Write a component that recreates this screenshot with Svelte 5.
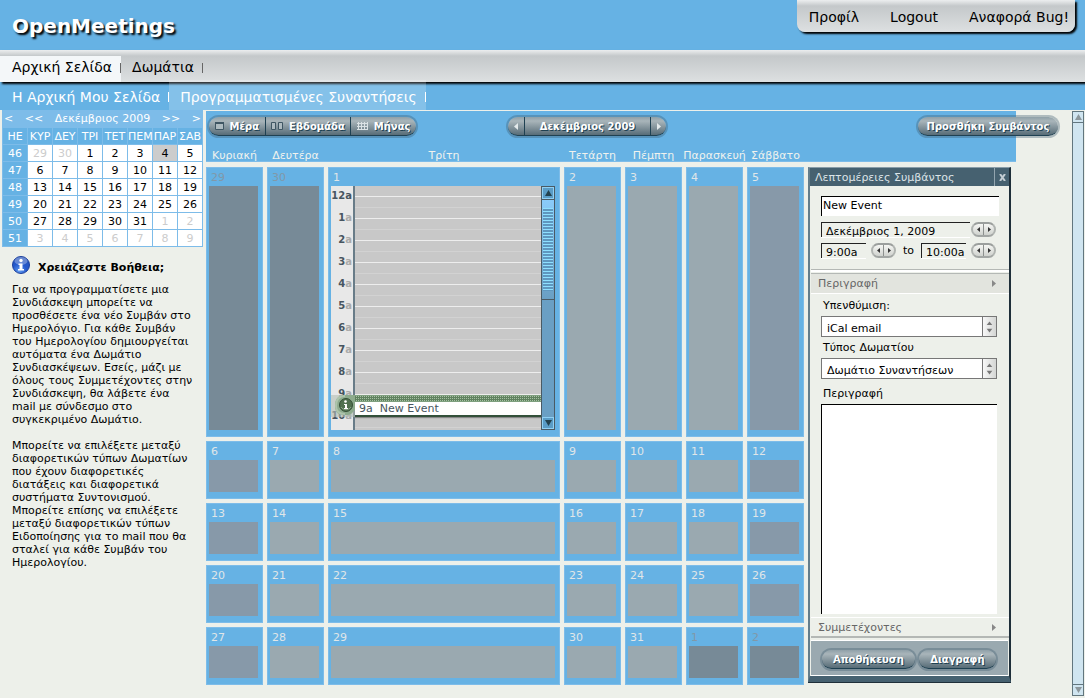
<script lang="ts">
	const dayNames = ['Κυριακή', 'Δευτέρα', 'Τρίτη', 'Τετάρτη', 'Πέμπτη', 'Παρασκευή', 'Σάββατο'];
	const shortNames = ['ΗΕ', 'ΚΥΡ', 'ΔΕΥ', 'ΤΡΙ', 'ΤΕΤ', 'ΠΕΜ', 'ΠΑΡ', 'ΣΑΒ'];
	const hours = [12, 1, 2, 3, 4, 5, 6, 7, 8, 9, 10];

	// six weeks starting on Sunday 29 November 2009
	const days = Array.from({ length: 42 }, (_, i) => {
		const date = new Date(2009, 10, 29 + i);
		return { n: date.getDate(), other: date.getMonth() !== 11, weekend: i % 7 === 0 || i % 7 === 6 };
	});
	const weeks = Array.from({ length: 6 }, (_, w) => days.slice(w * 7, w * 7 + 7));

	const help = [
		`Για να προγραμματίσετε μια
Συνδιάσκεψη μπορείτε να
προσθέσετε ένα νέο Συμβάν στο
Ημερολόγιο. Για κάθε Συμβάν
του Ημερολογίου δημιουργείται
αυτόματα ένα Δωμάτιο
Συνδιασκέψεων. Εσείς, μάζι με
όλους τους Συμμετέχοντες στην
Συνδιάσκεψη, θα λάβετε ένα
mail με σύνδεσμο στο
συγκεκριμένο Δωμάτιο.`,
		`Μπορείτε να επιλέξετε μεταξύ
διαφορετικών τύπων Δωματίων
που έχουν διαφορετικές
διατάξεις και διαφορετικά
συστήματα Συντονισμού.
Μπορείτε επίσης να επιλέξετε
μεταξύ διαφορετικών τύπων
Ειδοποίησης για το mail που θα
σταλεί για κάθε Συμβάν του
Ημερολογίου.`
	];

	let title = $state('New Event');
	let date = $state('Δεκέμβριος 1, 2009');
	let start = $state('9:00a');
	let end = $state('10:00a');
	let description = $state('');
</script>

{#snippet stepper(label: string)}
	<span class="stepper">
		<button type="button" aria-label={`${label}: προηγούμενο`}>
			<svg viewBox="0 0 3 5" width="3" height="5"><path d="M3 0v5L0 2.500z" fill="#333" /></svg>
		</button>
		<button type="button" aria-label={`${label}: επόμενο`}>
			<svg viewBox="0 0 3 5" width="3" height="5"><path d="M0 0v5l3-2.500z" fill="#333" /></svg>
		</button>
	</span>
{/snippet}

{#snippet spinner()}
	<svg class="spinner" viewBox="0 0 14 19" width="14" height="19" aria-hidden="true">
		<path d="M4 8h6L7 4z" fill="#777" />
		<path d="M4 12h6l-3 4z" fill="#777" />
	</svg>
{/snippet}

<div class="page">
	<header>
		<h1>OpenMeetings</h1>
		<nav class="user">
			<a href="#profile">Προφίλ</a>
			<a href="#logout">Logout</a>
			<a href="#bug">Αναφορά Bug!</a>
		</nav>
	</header>
	<nav class="tabs">
		<a class="active" href="#home">Αρχική Σελίδα</a>
		<a href="#rooms">Δωμάτια</a>
	</nav>
	<nav class="subtabs">
		<a href="#my">Η Αρχική Μου Σελίδα</a>
		<a class="active" href="#meetings">Προγραμματισμένες Συναντήσεις</a>
	</nav>

	<div class="content">
		<aside>
			<div class="mini">
				<div class="mini-head">
					<button type="button" aria-label="Προηγούμενο έτος">&lt;</button>
					<button type="button" aria-label="Προηγούμενος μήνας">&lt;&lt;</button>
					<span>Δεκέμβριος 2009</span>
					<button type="button" aria-label="Επόμενος μήνας">&gt;&gt;</button>
					<button type="button" aria-label="Επόμενο έτος">&gt;</button>
				</div>
				<table>
					<thead>
						<tr>{#each shortNames as name}<th>{name}</th>{/each}</tr>
					</thead>
					<tbody>
						{#each weeks as week, w}
							<tr>
								<th>{46 + w}</th>
								{#each week as day, d}
									<td class:other={day.other} class:today={w === 0 && d === 5}>{day.n}</td>
								{/each}
							</tr>
						{/each}
					</tbody>
				</table>
			</div>
			<div class="help">
				<h2>
					<svg viewBox="0 0 18 18" width="18" height="18" aria-hidden="true">
						<defs>
							<radialGradient id="ball" cx="40%" cy="85%" r="85%">
								<stop offset="0" stop-color="#5f9af0" />
								<stop offset=".5" stop-color="#2459cc" />
								<stop offset="1" stop-color="#2a55b8" />
							</radialGradient>
						</defs>
						<circle cx="9" cy="9" r="8.500" fill="url(#ball)" stroke="#1c3f9c" />
						<ellipse cx="9" cy="5" rx="6.500" ry="4" fill="#fff" opacity=".3" />
						<circle cx="9" cy="4.500" r="1.700" fill="#fff" />
						<path d="M6.500 7.500h4V13h1.500v1.500h-6V13h1.500V9h-1z" fill="#fff" />
					</svg>
					Χρειάζεστε Βοήθεια;
				</h2>
				{#each help as text}<p>{text}</p>{/each}
			</div>
		</aside>

		<main>
			<div class="toolbar">
				<div class="controls">
					<div class="pill views">
						<button type="button">
							<svg viewBox="0 0 9 8" width="9" height="8"><path d="M.5 1h8v6.500h-8z" fill="#aebbc0" stroke="#3f5663" /><path d="M0 1h9" stroke="#3f5663" stroke-width="2" /></svg>
							Μέρα
						</button>
						<button type="button">
							<svg viewBox="0 0 12 8" width="12" height="8"><path d="M.5.500h4v7h-4zm7 0h4v7h-4z" fill="#aebbc0" stroke="#3f5663" /></svg>
							Εβδομάδα
						</button>
						<button type="button">
							<svg viewBox="0 0 11 8" width="11" height="8"><path d="M0 1.500h11M0 4.500h11M0 7.500h11M1.500 0v8M4.500 0v8M7.500 0v8M10.500 0v8" stroke="#dbe2e5" /></svg>
							Μήνας
						</button>
					</div>
					<div class="pill month">
						<button type="button" aria-label="Προηγούμενος μήνας">
							<svg viewBox="0 0 4 7" width="4" height="7"><path d="M4 0v7L0 3.500z" fill="#e4eaec" /></svg>
						</button>
						<button type="button" class="wide">Δεκέμβριος 2009</button>
						<button type="button" aria-label="Επόμενος μήνας">
							<svg viewBox="0 0 4 7" width="4" height="7"><path d="M0 0v7l4-3.500z" fill="#e4eaec" /></svg>
						</button>
					</div>
					<div class="pill add"><button type="button">Προσθήκη Συμβάντος</button></div>
				</div>
				<div class="names">
					{#each dayNames as name}<span>{name}</span>{/each}
				</div>
			</div>

			<div class="board">
				<div class="grid">
					{#each days.slice(0, 35) as day, i}
						<div class="day" class:other={day.other} class:weekend={day.weekend}>
							<span class="number">{day.n}</span>
							{#if i === 2}
								<div class="timeline">
									<div class="slots">
										{#each hours as hour, h}
											<div class="slot">
												<span class="hour">{hour}<i class:dark={h === 0}>a</i></span>
												<span class="line"></span>
											</div>
										{/each}
										<div class="event">
											<span class="event-text">9a&nbsp; New Event</span>
											<svg viewBox="0 0 24 22" width="24" height="22" aria-hidden="true">
												<path d="M24 0H14C7 0 4 4 4 11s4 9 9 9h4c4 0 5-4 7-5z" fill="#8dab8d" />
												<path d="M14 1C8 1 5 5 5 11s4 8 9 8" fill="none" stroke="#aec4ac" stroke-width="2" />
												<circle cx="15" cy="10" r="6.500" fill="#50704f" stroke="#354f36" />
												<path d="M10 12a6 6 0 0 0 10 0" fill="none" stroke="#88a186" />
												<circle cx="14.500" cy="6.500" r="1.300" fill="#fff" />
												<path d="M13 9h3v4h1v1h-4v-1h1v-3h-1z" fill="#fff" />
											</svg>
										</div>
									</div>
									<div class="day-scroll">
										<button type="button" aria-label="Πάνω">
											<svg viewBox="0 0 7 6" width="7" height="6"><path d="M0 6h7L3.500 0z" fill="#23424f" /></svg>
										</button>
										<div class="thumb"></div>
										<button type="button" aria-label="Κάτω">
											<svg viewBox="0 0 7 6" width="7" height="6"><path d="M0 0h7L3.500 6z" fill="#23424f" /></svg>
										</button>
									</div>
								</div>
							{:else}
								<div class="box"></div>
							{/if}
						</div>
					{/each}
				</div>

				<section class="dialog">
					<div class="dialog-title">
						<h2>Λεπτομέρειες Συμβάντος</h2>
						<button type="button" aria-label="Κλείσιμο">
							<svg viewBox="0 0 7 7" width="7" height="7"><path d="M1 0l5 7M6 0L1 7" stroke="#c3cdd3" stroke-width="2" /></svg>
						</button>
					</div>
					<form>
						<div class="when">
							<input class="name" aria-label="Τίτλος" bind:value={title} />
							<div class="row">
								<input class="inset" aria-label="Ημερομηνία" bind:value={date} />
								{@render stepper('Ημερομηνία')}
							</div>
							<div class="row">
								<input class="inset time" aria-label="Έναρξη" bind:value={start} />
								{@render stepper('Έναρξη')}
								<label for="end">to</label>
								<input class="inset time" id="end" bind:value={end} />
								{@render stepper('Λήξη')}
							</div>
						</div>
						<button type="button" class="section open">
							Περιγραφή
							<svg viewBox="0 0 4 7" width="4" height="7"><path d="M0 0v7l4-3.500z" fill="#888" /></svg>
						</button>
						<div class="fields">
							<label for="reminder">Υπενθύμιση:</label>
							<div class="select">
								<select id="reminder"><option>iCal email</option></select>
								{@render spinner()}
							</div>
							<label for="room">Τύπος Δωματίου</label>
							<div class="select">
								<select id="room"><option>Δωμάτιο Συναντήσεων</option></select>
								{@render spinner()}
							</div>
							<label class="last" for="description">Περιγραφή</label>
							<textarea id="description" bind:value={description}></textarea>
						</div>
						<button type="button" class="section closed">
							Συμμετέχοντες
							<svg viewBox="0 0 4 7" width="4" height="7"><path d="M0 0v7l4-3.500z" fill="#888" /></svg>
						</button>
						<div class="actions">
							<div class="pill save"><button type="button">Αποθήκευση</button></div>
							<div class="pill delete"><button type="button">Διαγραφή</button></div>
						</div>
					</form>
				</section>
			</div>
		</main>

		<div class="page-scroll">
			<button type="button" aria-label="Πάνω">
				<svg viewBox="0 0 7 6" width="7" height="6"><path d="M0 6h7L3.500 0z" fill="#8c979c" /></svg>
			</button>
			<button type="button" aria-label="Κάτω">
				<svg viewBox="0 0 7 6" width="7" height="6"><path d="M0 0h7L3.500 6z" fill="#8c979c" /></svg>
			</button>
		</div>
	</div>
</div>

<style>
	:global(body) {
		margin: 0;
		background: #edf0ea;
	}

	.page {
		display: flex;
		flex-direction: column;
		min-height: 100vh;
		background: linear-gradient(#66b2e4 110px, #edf0ea 110px);
		font-family: Verdana, 'DejaVu Sans', sans-serif;
		font-size: 11px;
		line-height: 13px;
		color: #000;
	}

	.page * {
		box-sizing: border-box;
	}

	button,
	input,
	select,
	textarea {
		margin: 0;
		padding: 0;
		border: 0;
		border-radius: 0;
		background: none;
		font: inherit;
		color: inherit;
	}

	svg {
		display: block;
		flex-shrink: 0;
	}

	a {
		color: inherit;
		text-decoration: none;
	}

	h1,
	h2,
	p {
		margin: 0;
	}

	/* top bars */

	header {
		display: flex;
		align-items: flex-start;
		justify-content: space-between;
		height: 50px;
		padding: 0 10px 0 12px;
		background: #66b2e4;
	}

	h1 {
		padding-top: 14px;
		font-size: 20px;
		line-height: 24px;
		color: #fff;
		text-shadow: 2px 2px 2px #000;
	}

	.user {
		display: flex;
		gap: 31px;
		height: 32px;
		padding: 0 6px 0 12px;
		border-radius: 0 0 8px 8px;
		background: linear-gradient(#eceeef, #c4c8ca 6px, #dde0e1);
		box-shadow: 2px 2px 2px #000;
		font-size: 14px;
		line-height: 34px;
	}

	.tabs {
		position: relative;
		z-index: 1;
		display: flex;
		height: 32px;
		padding-top: 6px;
		background: linear-gradient(#eceeef, #c4c8ca 6px, #dde0e1);
		box-shadow: 2px 2px 2px #000;
	}

	.tabs a,
	.subtabs a {
		display: flex;
		align-items: center;
		padding-left: 11px;
		font-size: 14px;
	}

	.tabs a:first-child,
	.subtabs a:first-child {
		padding-left: 12px;
	}

	.tabs a {
		padding-bottom: 3px;
	}

	.tabs a::after,
	.subtabs a::after {
		content: '';
		width: 1px;
		height: 10px;
		margin-left: 8px;
		background: #666;
	}

	.subtabs a::after {
		background: #fff;
	}

	.tabs .active {
		background: #f4f7f9;
	}

	/* starts over the shadow of the bar above */
	.subtabs {
		position: relative;
		z-index: 2;
		display: flex;
		height: 30px;
		margin-top: -2px;
		color: #fff;
	}

	.subtabs a {
		padding-top: 4px;
	}

	.subtabs .active {
		background: rgb(255 255 255 / 20%);
	}

	.content {
		display: flex;
		flex: 1;
	}

	/* left column */

	aside {
		width: 204px;
		flex-shrink: 0;
		padding-left: 2px;
	}

	.mini {
		width: 201px;
		background: #7dbce9;
		color: #fff;
	}

	.mini-head {
		display: flex;
		align-items: center;
		justify-content: space-between;
		height: 17px;
		padding: 0 2px;
	}

	.mini table {
		width: 100%;
		table-layout: fixed;
		border-spacing: 1px;
	}

	.mini th,
	.mini td {
		height: 16px;
		padding: 0;
		line-height: 13px;
		text-align: center;
		font-weight: normal;
	}

	.mini th {
		background: #66b2e4;
	}

	.mini td {
		background: #fff;
		color: #000;
	}

	.mini td.other {
		color: #ccc;
	}

	.mini td.today {
		background: #ccc;
	}

	.help {
		padding: 9px 0 0 10px;
	}

	.help h2 {
		display: flex;
		align-items: flex-end;
		gap: 8px;
		margin-bottom: 9px;
		font-size: 11px;
	}

	.help p {
		margin-bottom: 13px;
		white-space: pre;
	}

	/* calendar */

	main {
		flex: 1;
		min-width: 0;
		margin-right: 56px;
		padding: 1px 0 12px 2px;
	}

	.toolbar {
		height: 51px;
		border-bottom: 1px solid #7dbce9;
		background: #66b2e4;
		color: #f0f2ee;
	}

	.controls {
		display: flex;
		position: relative;
		height: 38px;
		padding: 6px 0 0 3px;
	}

	.names,
	.grid {
		display: grid;
		grid-template-columns: 57px 57px minmax(120px, 1fr) repeat(4, 57px);
		gap: 4px;
	}

	.names {
		margin-right: 212px;
		justify-items: center;
		white-space: nowrap;
	}

	.names span {
		margin: 0 -4px;
	}

	.pill {
		display: flex;
		height: 19px;
		border-radius: 10px;
		overflow: hidden;
		border-bottom: 1px solid #1f4152;
		background: linear-gradient(#8fa0a8, #a9b5ba 4px, #576c77);
		box-shadow: 0 0 0 2px rgb(60 90 110 / 35%);
		font-weight: bold;
		color: #fff;
	}

	.pill button {
		display: flex;
		align-items: center;
		justify-content: center;
		gap: 6px;
		font-size: 10px;
		text-shadow: 1px 1px 0 #1f4152;
		white-space: nowrap;
	}

	.pill button + button {
		border-left: 1px solid #1f4152;
	}

	.views {
		width: 207px;
	}

	.views button {
		flex: 1 1 auto;
	}

	.month {
		width: 158px;
		margin-left: 92px;
	}

	.month button {
		width: 16px;
	}

	.month .wide {
		flex: 1;
	}

	/* hangs over the right end of the blue bar */
	.add {
		position: absolute;
		right: -42px;
		width: 140px;
	}

	.add button,
	.save button,
	.delete button {
		width: 100%;
	}

	.board {
		display: flex;
		gap: 4px;
		margin: 5px 5px 0 0;
	}

	.grid {
		flex: 1;
		grid-template-rows: 270px repeat(4, 58px);
	}

	.day {
		display: flex;
		flex-direction: column;
		padding: 0 4px 6px 2px;
		border: 1px solid #7dbce9;
		background: #66b2e4;
	}

	.number {
		height: 18px;
		padding: 3px 0 0 2px;
		color: #e0e6e8;
	}

	.other .number {
		color: #8198a8;
	}

	.box {
		flex: 1;
		background: #9aa9b0;
	}

	.weekend .box {
		background: #8799a9;
	}

	.other .box {
		background: #778a97;
	}

	.timeline {
		display: flex;
		flex: 1;
		min-height: 0;
	}

	.slots {
		position: relative;
		flex: 1;
		overflow: hidden;
		background: linear-gradient(90deg, #e8e8e8 22px, #687c88 22px, #687c88 24px, #c8c8c8 24px);
	}

	.slot {
		display: flex;
		height: 22px;
	}

	.hour {
		display: flex;
		justify-content: flex-end;
		width: 24px;
		padding: 3px 3px 0 0;
		font-size: 10px;
		font-weight: bold;
		color: #475560;
	}

	.hour i {
		font-style: normal;
		color: #aaa;
	}

	.hour .dark {
		color: #475560;
	}

	.line {
		flex: 1;
		background: linear-gradient(
			transparent 10px,
			#ededed 10px,
			#ededed 11px,
			transparent 11px,
			transparent 21px,
			#d2d2d2 21px
		);
	}

	.event {
		position: absolute;
		top: 209px;
		left: 0;
		right: 0;
		height: 22px;
		background: rgb(180 190 180 / 60%);
	}

	.event-text {
		display: block;
		margin-left: 24px;
		padding-left: 4px;
		border-top: 7px solid #7fa07f;
		border-bottom: 2px solid #33503a;
		background: #fff;
		box-shadow: 0 1px 1px #888;
		color: #475560;
	}

	.event::after {
		content: '';
		position: absolute;
		inset: 1px 0 auto 24px;
		height: 5px;
		background:
			repeating-linear-gradient(90deg, #5f825f 0 1px, transparent 1px 2px),
			repeating-linear-gradient(#a5c0a2 0 1px, #5f825f 1px 2px);
	}

	.event svg {
		position: absolute;
		top: 0;
		left: 0;
	}

	.day-scroll {
		display: flex;
		flex-direction: column;
		width: 14px;
		border: 1px solid #4a5a64;
		background: #6a9fc4;
	}

	.day-scroll button {
		display: grid;
		place-items: center;
		height: 12px;
		border: 1px solid #8fd0f4;
		background: #5a9cc6;
	}

	.day-scroll button:last-child {
		margin-top: auto;
	}

	.thumb {
		height: 101px;
		padding: 8px 1px;
		border: solid #4a5a64;
		border-width: 1px 0;
		background:
			repeating-linear-gradient(#8ee0ff 0 1px, #5f97bf 1px 3px) content-box,
			linear-gradient(#8acbfa, #6a9fc4);
	}

	/* event details */

	.dialog {
		display: flex;
		flex-direction: column;
		width: 203px;
		flex-shrink: 0;
		margin: 0 0 3px;
		border: solid;
		border-width: 1px 2px 6px;
		border-color: #8a9da8 #1f2f3a #466170 #647d8b;
		box-shadow: 0 1px 0 #1f2f3a;
	}

	.dialog-title {
		display: flex;
		justify-content: space-between;
		height: 18px;
		background: #466170;
		color: #dde4e8;
	}

	.dialog-title h2 {
		padding: 3px 0 0 5px;
		font-size: 11px;
		font-weight: normal;
		white-space: nowrap;
	}

	.dialog-title button {
		display: grid;
		place-items: center;
		width: 15px;
		border-left: 1px solid #93a5af;
	}

	form {
		display: flex;
		flex-direction: column;
		flex: 1;
		padding-left: 1px;
	}

	.when {
		display: flex;
		flex-direction: column;
		gap: 6px;
		padding: 10px 10px 11px;
		border-bottom: 1px solid #b4b8b5;
		box-shadow: 0 2px 0 #fff;
	}

	.name {
		width: 100%;
		height: 20px;
		padding: 0 1px 2px;
		border: solid #000;
		border-width: 1px 0 0 1px;
		background: #fff;
	}

	.row {
		display: flex;
		align-items: center;
		padding-right: 3px;
	}

	.inset {
		flex: 1;
		min-width: 0;
		height: 15px;
		padding: 2px 0 0 4px;
		border: solid #222;
		border-width: 1px 0 0 1px;
		box-shadow: 0 1px 0 #fff;
	}

	.time {
		flex: 0 0 45px;
	}

	.row .time + .stepper {
		margin-left: 5px;
	}

	.row label {
		flex: 1;
		text-align: center;
	}

	.row label + .time + .stepper {
		margin-left: 5px;
	}

	.stepper {
		display: flex;
		width: 25px;
		height: 15px;
		margin-left: 1px;
		border: 2px solid;
		border-color: #9b9f9d #b0b4b1 #a2a6a4;
		border-radius: 8px;
		background: linear-gradient(#f6f7f4, #cfd2ce);
	}

	.stepper button {
		display: grid;
		place-items: center;
		flex: 1;
	}

	.stepper button + button {
		border-left: 1px solid #8c908e;
	}

	.section {
		display: flex;
		align-items: center;
		justify-content: space-between;
		height: 21px;
		padding: 0 13px 0 7px;
		border: solid #fff;
		border-width: 1px 0;
		color: #666;
	}

	.open {
		margin-top: 3px;
		border-top-color: #b4b8b5;
		background: #e2e4de;
	}

	.closed {
		border-bottom: 2px solid #b4b8b5;
	}

	.fields {
		display: flex;
		flex-direction: column;
		flex: 1;
		padding: 5px 12px 3px 10px;
	}

	.fields label {
		height: 17px;
		padding-left: 2px;
	}

	.fields .last {
		height: 21px;
		padding-top: 4px;
	}

	.select {
		position: relative;
		display: flex;
		margin-bottom: 4px;
	}

	select {
		width: 100%;
		height: 21px;
		padding: 3px 18px 0 5px;
		appearance: none;
		border: 1px solid #777;
		background: #fff;
	}

	.spinner {
		position: absolute;
		top: 1px;
		right: 1px;
		border-left: 1px solid #777;
		background: linear-gradient(90deg, #f8f8f8, #d4d6d4);
	}

	textarea {
		flex: 1;
		min-height: 80px;
		resize: none;
		border: solid #000;
		border-width: 1px 0 0 1px;
		background: #fff;
	}

	.actions {
		display: flex;
		gap: 4px;
		height: 36px;
		margin: 2px 1px 0 0;
		padding: 9px 12px 0 11px;
		border: solid #fff;
		border-width: 1px 0;
		background: #9aa9b0;
	}

	.save {
		flex: 6;
	}

	.delete {
		flex: 5;
	}

	.page-scroll {
		display: flex;
		flex-direction: column;
		justify-content: space-between;
		width: 12px;
		margin: 1px 1px 2px 0;
		border: 1px solid #62767e;
		background: #d0e5f0;
	}

	.page-scroll button {
		display: grid;
		place-items: center;
		height: 11px;
		border-bottom: 1px solid #62767e;
	}

	.page-scroll button:last-child {
		border-top: 1px solid #62767e;
		border-bottom: 0;
	}
</style>
